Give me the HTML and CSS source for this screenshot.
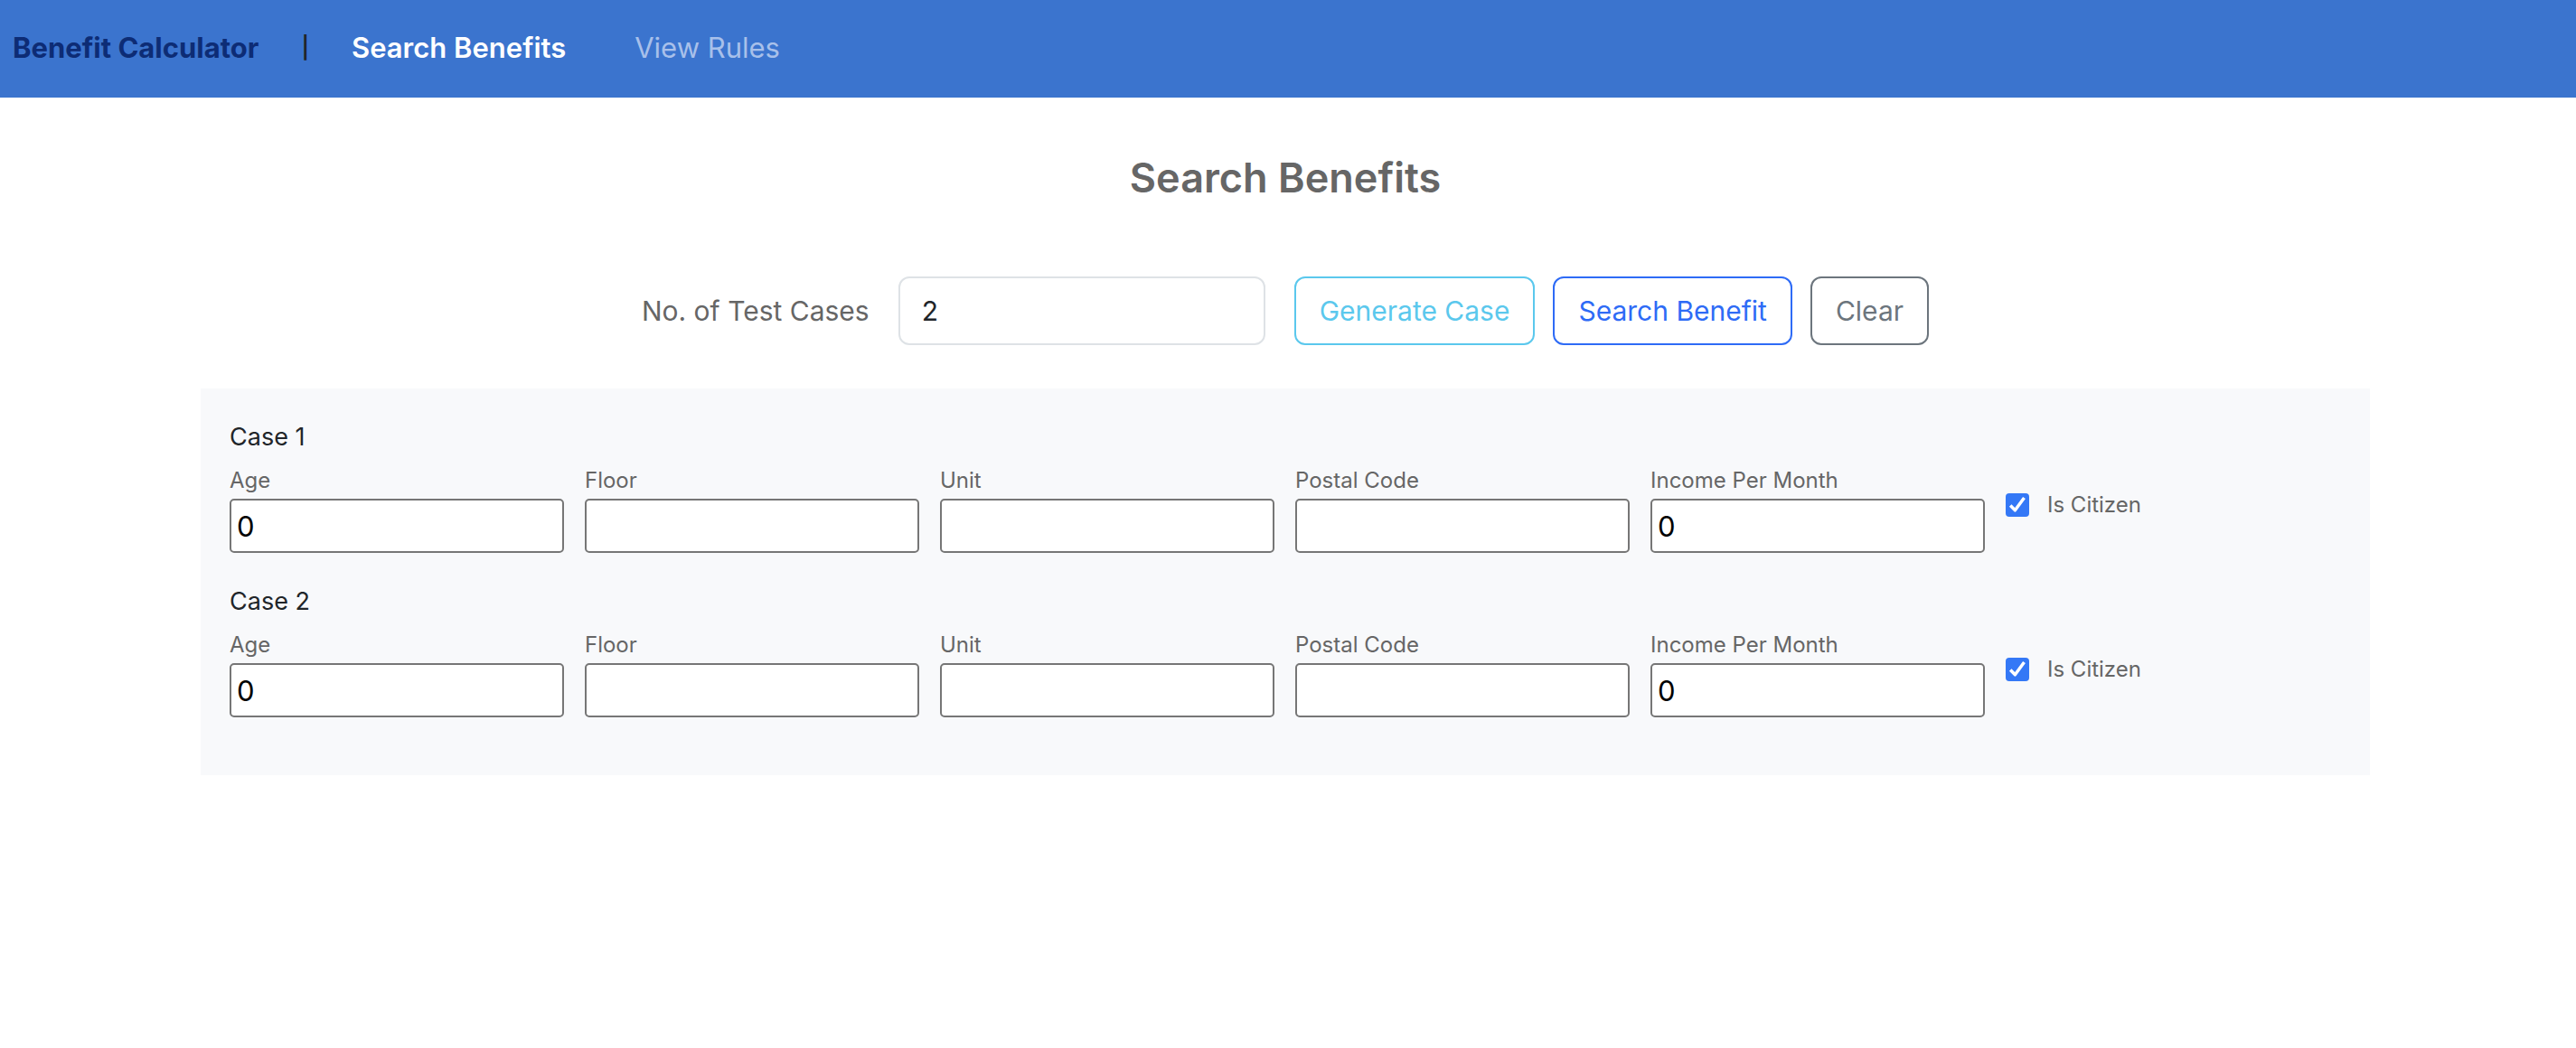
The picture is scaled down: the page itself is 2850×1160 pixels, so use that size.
FILE: index.html
```html
<!DOCTYPE html>
<html lang="en">
<head>
<meta charset="utf-8">
<meta name="viewport" content="width=device-width, initial-scale=1">
<title>Benefit Calculator</title>
<link rel="stylesheet" href="styles.css">
</head>
<body>
<header class="navbar">
  <a class="brand" href="#">Benefit Calculator</a>
  <span class="divider">|</span>
  <nav class="nav-links">
    <a class="nav-link active" href="#search" aria-current="page">Search Benefits</a>
    <a class="nav-link" href="#rules">View Rules</a>
  </nav>
</header>
<main class="page">
  <h1 class="title">Search Benefits</h1>
  <form class="toolbar">
    <label class="toolbar-label" for="count">No. of Test Cases</label>
    <input class="count" id="count" type="text" inputmode="numeric" value="2">
    <div class="actions">
      <button class="btn btn-info" type="button">Generate Case</button>
      <button class="btn btn-primary" type="button">Search Benefit</button>
      <button class="btn btn-secondary" type="button">Clear</button>
    </div>
  </form>
  <section class="cases">
    <div class="case">
      <h2 class="case-title">Case 1</h2>
      <div class="case-row">
        <div class="field"><label for="age1">Age</label><input id="age1" type="text" value="0"></div>
        <div class="field"><label for="floor1">Floor</label><input id="floor1" type="text"></div>
        <div class="field"><label for="unit1">Unit</label><input id="unit1" type="text"></div>
        <div class="field"><label for="postal1">Postal Code</label><input id="postal1" type="text"></div>
        <div class="field"><label for="income1">Income Per Month</label><input id="income1" type="text" value="0"></div>
        <div class="check"><input id="citizen1" type="checkbox" checked><label for="citizen1">Is Citizen</label></div>
      </div>
    </div>
    <div class="case">
      <h2 class="case-title">Case 2</h2>
      <div class="case-row">
        <div class="field"><label for="age2">Age</label><input id="age2" type="text" value="0"></div>
        <div class="field"><label for="floor2">Floor</label><input id="floor2" type="text"></div>
        <div class="field"><label for="unit2">Unit</label><input id="unit2" type="text"></div>
        <div class="field"><label for="postal2">Postal Code</label><input id="postal2" type="text"></div>
        <div class="field"><label for="income2">Income Per Month</label><input id="income2" type="text" value="0"></div>
        <div class="check"><input id="citizen2" type="checkbox" checked><label for="citizen2">Is Citizen</label></div>
      </div>
    </div>
  </section>
</main>
</body>
</html>
```
FILE: styles.css
```css
* { box-sizing: border-box; }

body {
  margin: 0;
  background: #fff;
  color: #212529;
  font-family: Inter, "Liberation Sans", sans-serif;
  font-size: 31px;
  line-height: 48px;
}

.navbar {
  display: flex;
  align-items: center;
  padding: 29px 14px 31px;
  background: #3b74ce;
}

.brand {
  color: #0d2c75;
  font-weight: 700;
  text-decoration: none;
}

.divider {
  margin: 0 47px;
  font-size: 24px;
  font-weight: 600;
}

.nav-links { display: flex; gap: 76px; }

.nav-link {
  color: #a8c0ea;
  text-decoration: none;
}

.nav-link.active {
  color: #fff;
  font-weight: 600;
}

.page { padding: 60px 6px 0 0; }

.title {
  margin: 0 0 80px;
  color: #666;
  font-size: 45px;
  font-weight: 600;
  line-height: 58px;
  text-align: center;
}

.toolbar {
  display: flex;
  flex-wrap: wrap;
  align-items: center;
  justify-content: center;
  gap: 32px;
  margin-bottom: 48px;
  font-size: 30px;
}

.toolbar-label { color: #666; }

.count {
  width: 406px;
  height: 76px;
  padding: 0 24px;
  border: 2px solid #dee2e6;
  border-radius: 12px;
  background: #fff;
  color: #212529;
  font: inherit;
}

.actions { display: flex; gap: 20px; }

.btn {
  padding: 12px 26px;
  border: 2px solid currentColor;
  border-radius: 12px;
  background: #fff;
  font: inherit;
}

.btn-info { color: #5bc8ed; }
.btn-primary { color: #2e6bf6; }
.btn-secondary { color: #6c757d; }

.cases {
  display: flex;
  flex-direction: column;
  gap: 32px;
  max-width: 2400px;
  margin: 0 auto;
  padding: 32px 32px 64px;
  background: #f8f9fb;
}

.case-title {
  margin: 0;
  font-size: 27px;
  font-weight: 400;
  line-height: 44px;
}

.case-row {
  display: flex;
  flex-wrap: wrap;
  gap: 23px;
}

.field {
  display: flex;
  flex-direction: column;
  width: 370px;
}

.field label,
.check label {
  color: #666;
  font-size: 24px;
  line-height: 40px;
}

.field label { padding-top: 6px; }

.field input {
  height: 60px;
  padding: 0 6px;
  border: 2px solid #767676;
  border-radius: 5px;
  background: #fff;
  color: #000;
  font: inherit;
}

.check {
  display: flex;
  align-items: center;
  gap: 20px;
}

.check input {
  width: 26px;
  height: 26px;
  margin: 0;
  border-radius: 4px;
  appearance: none;
  background: #3478f6;
}

.check input:checked {
  background: #3478f6 url("data:image/svg+xml,%3Csvg xmlns='http://www.w3.org/2000/svg' viewBox='0 0 26 26'%3E%3Cpath d='M5.200 13.500L10.400 18.800L20.500 5' fill='none' stroke='%23fff' stroke-width='3.500' stroke-linejoin='round'/%3E%3C/svg%3E") center / contain no-repeat;
}
```
